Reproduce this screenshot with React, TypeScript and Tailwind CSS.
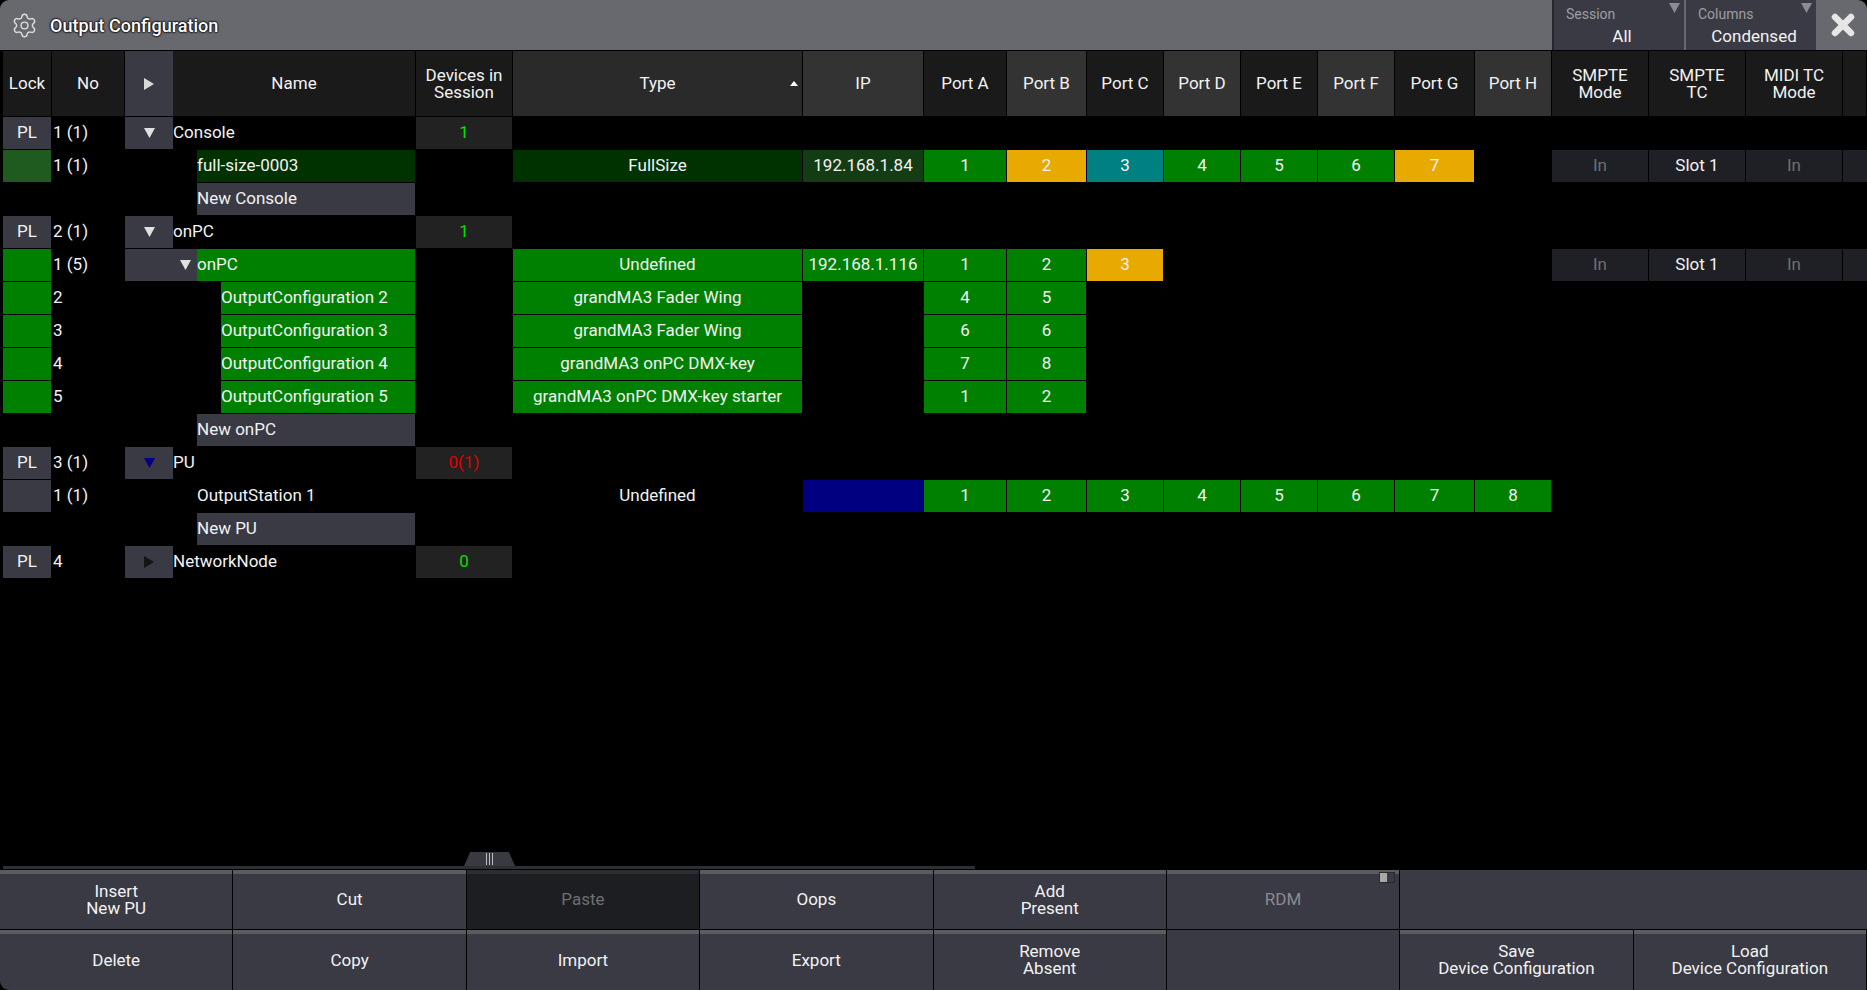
import { Settings } from "lucide-react";

type Port = [string, string];

const COLS =
  "grid grid-cols-[49px_73px_48px_243px_97px_290px_121px_83px_80px_77px_77px_77px_77px_80px_77px_97px_97px_97px_24px] pl-[3px]";

const GREEN = "bg-[#008000]";
const ORANGE = "bg-[#e8a900]";
const TEAL = "bg-[#008080]";
const PANEL = "bg-[#393a43]";

function Tri({ dir, color }: { dir: "down" | "right" | "up"; color: string }) {
  const pts = dir === "down" ? "0,0 11,0 5.5,10" : dir === "right" ? "0,0 10,6 0,12" : "0,5 4,0 8,5";
  const size = dir === "up" ? [8, 5] : dir === "right" ? [10, 12] : [11, 10];
  return (
    <svg width={size[0]} height={size[1]}>
      <polygon points={pts} fill={color} />
    </svg>
  );
}

function HeadCell({ children, bg }: { children?: React.ReactNode; bg: string }) {
  return (
    <div className={`mr-px flex items-center justify-center text-center leading-[17px] ${bg}`}>{children}</div>
  );
}

function Header() {
  const dark = "bg-[#1a1a1a]";
  const light = "bg-[#333333]";
  return (
    <div className={`${COLS} h-[65px] mb-px`}>
      <HeadCell bg={dark}>Lock</HeadCell>
      <HeadCell bg={dark}>No</HeadCell>
      <div className={`flex items-center justify-center ${PANEL}`}>
        <Tri dir="right" color="#d9d9d9" />
      </div>
      <HeadCell bg={dark}>Name</HeadCell>
      <HeadCell bg={dark}>
        Devices in
        <br />
        Session
      </HeadCell>
      <div className="relative mr-px flex items-center justify-center bg-[#2a2a2a]">
        Type
        <div className="absolute right-[4px] top-[30px] flex">
          <Tri dir="up" color="#ffffff" />
        </div>
      </div>
      <HeadCell bg={light}>IP</HeadCell>
      <HeadCell bg={dark}>Port A</HeadCell>
      <HeadCell bg={light}>Port B</HeadCell>
      <HeadCell bg={dark}>Port C</HeadCell>
      <HeadCell bg={light}>Port D</HeadCell>
      <HeadCell bg={dark}>Port E</HeadCell>
      <HeadCell bg={light}>Port F</HeadCell>
      <HeadCell bg={dark}>Port G</HeadCell>
      <HeadCell bg={light}>Port H</HeadCell>
      <HeadCell bg={dark}>
        SMPTE
        <br />
        Mode
      </HeadCell>
      <HeadCell bg={dark}>
        SMPTE
        <br />
        TC
      </HeadCell>
      <HeadCell bg={dark}>
        MIDI TC
        <br />
        Mode
      </HeadCell>
      <HeadCell bg={dark} />
    </div>
  );
}

type RowProps = {
  lock?: string;
  lockBg?: string;
  no?: string;
  noPad?: string;
  arrow?: string;
  arrowWide?: boolean;
  arrowDir?: "down" | "right";
  indent?: "none" | "one" | "two";
  name?: string;
  nameBg?: string;
  devices?: string;
  devColor?: string;
  type?: string;
  typeBg?: string;
  ip?: string;
  ipBg?: string;
  ports?: Port[];
  smpte?: boolean;
};

function Row(p: RowProps) {
  const ports = p.ports ?? [];
  const cells = [0, 1, 2, 3, 4, 5, 6, 7];
  return (
    <div className={`${COLS} h-[32px] mb-px`}>
      <div className={`mr-px flex items-center justify-center ${p.lockBg ?? ""}`}>{p.lock}</div>
      <div className={`mr-px flex items-center ${p.noPad ?? "pl-px"}`}>{p.no}</div>
      <div className={`flex items-center justify-center ${p.arrow ? PANEL : ""}`}>
        {p.arrow && !p.arrowWide && <Tri dir={p.arrowDir ?? "down"} color={p.arrow} />}
      </div>
      <div className="mr-px flex">
        {p.indent === "one" && (
          <div className={`w-[24px] flex items-center justify-center ${p.arrowWide ? PANEL : ""}`}>
            {p.arrowWide && p.arrow && <Tri dir="down" color={p.arrow} />}
          </div>
        )}
        {p.indent === "two" && <div className="w-[48px]" />}
        <div className={`flex-1 flex items-center ${p.nameBg ?? ""}`}>{p.name}</div>
      </div>
      <div className={`mr-px flex items-center justify-center ${p.devices ? "bg-[#222222]" : ""} ${p.devColor ?? ""}`}>
        {p.devices}
      </div>
      <div className={`mr-px flex items-center justify-center ${p.typeBg ?? ""}`}>{p.type}</div>
      <div className={`mr-px flex items-center justify-center ${p.ipBg ?? ""}`}>{p.ip}</div>
      {cells.map((i) => (
        <div key={i} className={`mr-px flex items-center justify-center ${ports[i]?.[1] ?? ""}`}>
          {ports[i]?.[0]}
        </div>
      ))}
      <div className={`mr-px flex items-center justify-center text-[#6d6e72] ${p.smpte ? "bg-[#1f2025]" : ""}`}>
        {p.smpte && "In"}
      </div>
      <div className={`mr-px flex items-center justify-center ${p.smpte ? "bg-[#1f2025]" : ""}`}>
        {p.smpte && "Slot 1"}
      </div>
      <div className={`mr-px flex items-center justify-center text-[#6d6e72] ${p.smpte ? "bg-[#1f2025]" : ""}`}>
        {p.smpte && "In"}
      </div>
      <div className={p.smpte ? "bg-[#1f2025]" : ""} />
    </div>
  );
}

function Dropdown({ label, value, width }: { label: string; value: string; width: string }) {
  return (
    <div className={`relative h-full ${width} mr-[2px] ${PANEL}`}>
      <div className="absolute left-[12px] top-[6px] text-[14px] leading-[17px] text-[#9d9ea2]">{label}</div>
      <div className="absolute right-[4px] top-[3px] flex">
        <Tri dir="down" color="#8b8c90" />
      </div>
      <div className="pt-[26px] pl-[6px] text-center leading-[20px]">{value}</div>
    </div>
  );
}

function Btn({ children, top = true, muted }: { children?: React.ReactNode; top?: boolean; muted?: string }) {
  return (
    <div
      className={`relative flex items-center justify-center border-r border-black text-center leading-[17px] ${
        muted ?? PANEL
      }`}
    >
      {top && <div className={`absolute left-0 right-0 top-0 h-[4px] ${muted ? "bg-[#2c2d30]" : "bg-[#5b5c61]"}`} />}
      {children}
    </div>
  );
}

export default function App() {
  return (
    <div className="h-[990px] w-full bg-black overflow-hidden [font-family:Roboto,sans-serif] text-[17px] text-[#f2f2f2]">
      <div className="flex h-full flex-col rounded-t-[9px] rounded-bl-[9px] overflow-hidden">
        <div className="flex h-[50px] mb-px items-stretch bg-[#68696e]">
          <div className="flex flex-1 items-center pl-[11px]">
            <Settings size={27} strokeWidth={1.25} color="#dcdcdc" />
            <div className="ml-[12px] text-[18px] font-medium text-white [text-shadow:0_0_2px_#000,0_0_2px_#000,0_0_2px_#000]">
              Output Configuration
            </div>
          </div>
          <div className="w-[2px] bg-[#26272b]" />
          <Dropdown label="Session" value="All" width="w-[130px]" />
          <Dropdown label="Columns" value="Condensed" width="w-[130px]" />
          <div className="flex w-[49px] items-center justify-center">
            <svg width="24" height="24" viewBox="0 0 24 24">
              <path d="M4 4 L20 20 M20 4 L4 20" stroke="#e6e6e6" strokeWidth="6.5" strokeLinecap="round" />
            </svg>
          </div>
        </div>

        <Header />
        <Row lock="PL" lockBg={PANEL} no="1 (1)" arrow="#e0e0e0" name="Console" devices="1" devColor="text-[#00e000]" />
        <Row
          lockBg="bg-[#1f5a1f]"
          no="1 (1)"
          indent="one"
          name="full-size-0003"
          nameBg="bg-[#003200]"
          type="FullSize"
          typeBg="bg-[#003200]"
          ip="192.168.1.84"
          ipBg="bg-[#143c14]"
          ports={[
            ["1", GREEN],
            ["2", ORANGE],
            ["3", TEAL],
            ["4", GREEN],
            ["5", GREEN],
            ["6", GREEN],
            ["7", ORANGE],
          ]}
          smpte
        />
        <Row indent="one" name="New Console" nameBg={PANEL} />
        <Row lock="PL" lockBg={PANEL} no="2 (1)" arrow="#e0e0e0" name="onPC" devices="1" devColor="text-[#00e000]" />
        <Row
          lockBg={GREEN}
          no="1 (5)"
          arrow="#e0e0e0"
          arrowWide
          indent="one"
          name="onPC"
          nameBg={GREEN}
          type="Undefined"
          typeBg={GREEN}
          ip="192.168.1.116"
          ipBg={GREEN}
          ports={[
            ["1", GREEN],
            ["2", GREEN],
            ["3", ORANGE],
          ]}
          smpte
        />
        <Row
          lockBg={GREEN}
          no="2"
          indent="two"
          name="OutputConfiguration 2"
          nameBg={GREEN}
          type="grandMA3 Fader Wing"
          typeBg={GREEN}
          ports={[
            ["4", GREEN],
            ["5", GREEN],
          ]}
        />
        <Row
          lockBg={GREEN}
          no="3"
          indent="two"
          name="OutputConfiguration 3"
          nameBg={GREEN}
          type="grandMA3 Fader Wing"
          typeBg={GREEN}
          ports={[
            ["6", GREEN],
            ["6", GREEN],
          ]}
        />
        <Row
          lockBg={GREEN}
          no="4"
          indent="two"
          name="OutputConfiguration 4"
          nameBg={GREEN}
          type="grandMA3 onPC DMX-key"
          typeBg={GREEN}
          ports={[
            ["7", GREEN],
            ["8", GREEN],
          ]}
        />
        <Row
          lockBg={GREEN}
          no="5"
          indent="two"
          name="OutputConfiguration 5"
          nameBg={GREEN}
          type="grandMA3 onPC DMX-key starter"
          typeBg={GREEN}
          ports={[
            ["1", GREEN],
            ["2", GREEN],
          ]}
        />
        <Row indent="one" name="New onPC" nameBg={PANEL} />
        <Row lock="PL" lockBg={PANEL} no="3 (1)" arrow="#000080" name="PU" devices="0(1)" devColor="text-[#e00000]" />
        <Row
          lockBg={PANEL}
          no="1 (1)"
          indent="one"
          name="OutputStation 1"
          type="Undefined"
          ipBg="bg-[#000080]"
          ports={[
            ["1", GREEN],
            ["2", GREEN],
            ["3", GREEN],
            ["4", GREEN],
            ["5", GREEN],
            ["6", GREEN],
            ["7", GREEN],
            ["8", GREEN],
          ]}
        />
        <Row indent="one" name="New PU" nameBg={PANEL} />
        <Row
          lock="PL"
          lockBg={PANEL}
          no="4"
          arrow="#141414"
          arrowDir="right"
          name="NetworkNode"
          devices="0"
          devColor="text-[#00e000]"
        />

        <div className="relative flex flex-1 flex-col justify-end pl-[3px]">
          <div className="h-[3px] w-[972px] bg-[#2e2f33]" />
          <div className="absolute bottom-[3px] left-[464px] flex h-[14px] w-[51px] items-center justify-center gap-[2px] bg-[#393a40] [clip-path:polygon(12%_0,88%_0,100%_100%,0_100%)]">
            <div className="h-[12px] w-px bg-[#bdbdbd]" />
            <div className="h-[12px] w-px bg-[#bdbdbd]" />
            <div className="h-[12px] w-px bg-[#bdbdbd]" />
          </div>
        </div>

        <div className="grid h-[120px] shrink-0 grid-cols-8 grid-rows-[59px_60px] gap-y-px mt-px">
          <Btn>
            Insert
            <br />
            New PU
          </Btn>
          <Btn>Cut</Btn>
          <Btn muted="bg-[#1d1e21]">
            <span className="text-[#6d6e72]">Paste</span>
          </Btn>
          <Btn>Oops</Btn>
          <Btn>
            Add
            <br />
            Present
          </Btn>
          <Btn>
            <span className="text-[#8a8b8f]">RDM</span>
            <div className="absolute right-[4px] top-[2px] flex h-[11px] w-[16px] border border-[#2a2b30] bg-[#a8a8a8]">
              <div className="ml-auto h-full w-[7px] bg-[#393a43]" />
            </div>
          </Btn>
          <div className={`col-span-2 ${PANEL}`} />
          <Btn>Delete</Btn>
          <Btn>Copy</Btn>
          <Btn>Import</Btn>
          <Btn>Export</Btn>
          <Btn>
            Remove
            <br />
            Absent
          </Btn>
          <Btn top={false} />
          <Btn>
            Save
            <br />
            Device Configuration
          </Btn>
          <Btn>
            Load
            <br />
            Device Configuration
          </Btn>
        </div>
      </div>
    </div>
  );
}
